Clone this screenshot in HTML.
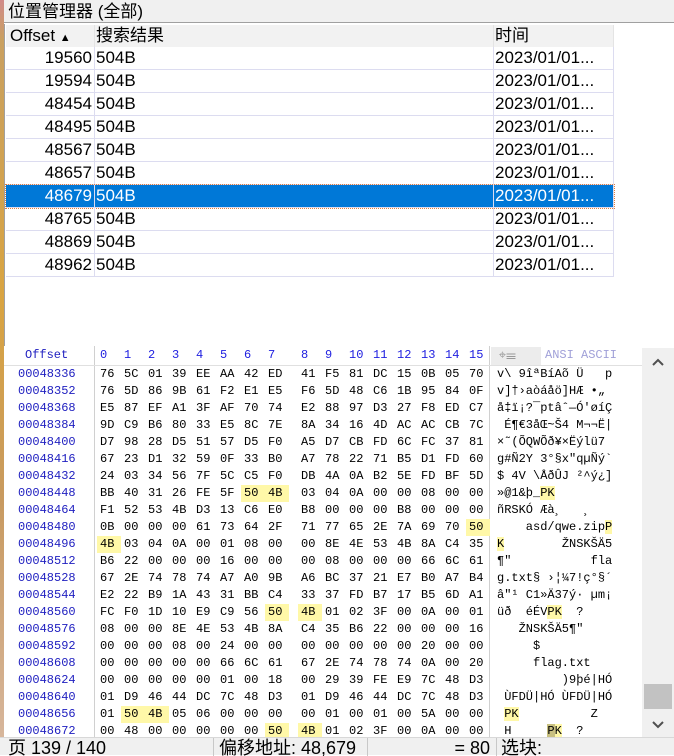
<!DOCTYPE html>
<html><head><meta charset="utf-8"><style>
*{margin:0;padding:0;box-sizing:border-box}
body{width:674px;height:755px;overflow:hidden;background:#fff;position:relative;font-family:"Liberation Sans","Noto Sans CJK SC",sans-serif}
.strip{position:absolute;left:0;top:0;width:4px;height:755px;background:linear-gradient(#d08a8a 0,#c9a060 40px,#d9a441 300px,#c89a60 500px,#d8b8a0 755px)}
.title{position:absolute;left:4px;top:0;width:670px;height:23px;background:#f0f0f0;border-bottom:1px solid #a0a0a0;font-size:17px;line-height:23px;padding-left:4px;color:#000}
.tbl{position:absolute;left:4px;top:24px;width:670px;height:322px;border-left:1px solid #a0a0a0;background:#fff}
.hd{position:absolute;left:1px;top:1px;width:608px;height:22px;background:#f2f2f2;font-size:17px;line-height:22px}
.row{position:absolute;left:1px;width:608px;height:23px;font-size:17px;line-height:22px;border-bottom:1px solid #dcdcf0}
.c1{position:absolute;left:0;width:86px;text-align:right;height:100%}
.c2{position:absolute;left:88px;height:100%;border-left:1px solid #dcdcf0;padding-left:1px;width:400px}
.c3{position:absolute;left:487px;height:100%;border-left:1px solid #dcdcf0;padding-left:1px;width:121px;border-right:1px solid #dcdcf0}
.sel{background:#0078d7;color:#fff;outline:1px dotted #e08040}
.hex{position:absolute;left:4px;top:346px;width:670px;height:392px;background:#fff;font-family:"Liberation Mono",monospace;font-size:12px}
.r{position:absolute;left:0;height:17px;line-height:17px;white-space:pre;width:640px}
.o{position:absolute;left:14px;color:#2020c0}
.h{position:absolute;left:93px}
.h i{display:inline-block;width:24px;padding-left:3px;font-style:normal}
.h i.g{margin-left:9px}
.y{background:#fff8a8}
.a{position:absolute;left:493px}
.a b{font-weight:normal;background:#fff8a8}
.a b.d{background:#c8c080}
.vl1{position:absolute;left:90px;top:0;width:1px;height:392px;background:#d0d0d0}
.vl2{position:absolute;left:485px;top:0;width:1px;height:392px;background:#d0d0d0}
.hl{position:absolute;left:0;top:19px;width:638px;height:1px;background:#e0e0e0}
.sb{position:absolute;left:638px;top:2px;width:32px;height:390px;background:#f0f0f0}
.st{position:absolute;left:0;top:737px;width:674px;height:18px;background:#f0f0f0;font-size:18px;line-height:20px;border-top:1px solid #d8d8d8}
.st div{position:absolute;top:0;height:18px;overflow:hidden}
.sep{border-left:1px solid #c8c8c8}
</style></head><body>
<div class="strip"></div>
<div class="title">位置管理器 (全部)</div>
<div class="tbl">
<div class="hd"><div class="c1" style="text-align:left;padding-left:4px">Offset <span style="font-size:11px">▲</span></div><div class="c2" style="border-color:#e4e4e4">搜索结果</div><div class="c3" style="border-color:#e4e4e4">时间</div></div>
<div class="row" style="top:23px"><div class="c1">19560</div><div class="c2">504B</div><div class="c3">2023/01/01...</div></div>
<div class="row" style="top:46px"><div class="c1">19594</div><div class="c2">504B</div><div class="c3">2023/01/01...</div></div>
<div class="row" style="top:69px"><div class="c1">48454</div><div class="c2">504B</div><div class="c3">2023/01/01...</div></div>
<div class="row" style="top:92px"><div class="c1">48495</div><div class="c2">504B</div><div class="c3">2023/01/01...</div></div>
<div class="row" style="top:115px"><div class="c1">48567</div><div class="c2">504B</div><div class="c3">2023/01/01...</div></div>
<div class="row" style="top:138px"><div class="c1">48657</div><div class="c2">504B</div><div class="c3">2023/01/01...</div></div>
<div class="row sel" style="top:161px"><div class="c1">48679</div><div class="c2">504B</div><div class="c3">2023/01/01...</div></div>
<div class="row" style="top:184px"><div class="c1">48765</div><div class="c2">504B</div><div class="c3">2023/01/01...</div></div>
<div class="row" style="top:207px"><div class="c1">48869</div><div class="c2">504B</div><div class="c3">2023/01/01...</div></div>
<div class="row" style="top:230px"><div class="c1">48962</div><div class="c2">504B</div><div class="c3">2023/01/01...</div></div>
</div>
<div class="hex">
<div class="vl1"></div><div class="vl2"></div><div class="hl"></div>
<div class="r" style="top:1px;color:#2020e0"><span class="o" style="left:21px">Offset</span><span class="h"><i>0</i><i>1</i><i>2</i><i>3</i><i>4</i><i>5</i><i>6</i><i>7</i><i class="g">8</i><i>9</i><i>10</i><i>11</i><i>12</i><i>13</i><i>14</i><i>15</i></span><span style="position:absolute;left:487px;top:0;width:50px;height:18px;background:#ececec;color:#999;font-size:13px">&nbsp;⌖☰</span><span class="a" style="left:541px;color:#a0a0d8">ANSI ASCII</span></div>
<div class="r" style="top:20px"><span class="o">00048336</span><span class="h"><i>76</i><i>5C</i><i>01</i><i>39</i><i>EE</i><i>AA</i><i>42</i><i>ED</i><i class="g">41</i><i>F5</i><i>81</i><i>DC</i><i>15</i><i>0B</i><i>05</i><i>70</i></span><span class="a">v\ 9îªBíAõ Ü   p</span></div>
<div class="r" style="top:37px"><span class="o">00048352</span><span class="h"><i>76</i><i>5D</i><i>86</i><i>9B</i><i>61</i><i>F2</i><i>E1</i><i>E5</i><i class="g">F6</i><i>5D</i><i>48</i><i>C6</i><i>1B</i><i>95</i><i>84</i><i>0F</i></span><span class="a">v]†›aòáåö]HÆ •„ </span></div>
<div class="r" style="top:54px"><span class="o">00048368</span><span class="h"><i>E5</i><i>87</i><i>EF</i><i>A1</i><i>3F</i><i>AF</i><i>70</i><i>74</i><i class="g">E2</i><i>88</i><i>97</i><i>D3</i><i>27</i><i>F8</i><i>ED</i><i>C7</i></span><span class="a">å‡ï¡?¯ptâˆ—Ó'øíÇ</span></div>
<div class="r" style="top:71px"><span class="o">00048384</span><span class="h"><i>9D</i><i>C9</i><i>B6</i><i>80</i><i>33</i><i>E5</i><i>8C</i><i>7E</i><i class="g">8A</i><i>34</i><i>16</i><i>4D</i><i>AC</i><i>AC</i><i>CB</i><i>7C</i></span><span class="a"> É¶€3åŒ~Š4 M¬¬Ë|</span></div>
<div class="r" style="top:88px"><span class="o">00048400</span><span class="h"><i>D7</i><i>98</i><i>28</i><i>D5</i><i>51</i><i>57</i><i>D5</i><i>F0</i><i class="g">A5</i><i>D7</i><i>CB</i><i>FD</i><i>6C</i><i>FC</i><i>37</i><i>81</i></span><span class="a">×˜(ÕQWÕð¥×Ëýlü7 </span></div>
<div class="r" style="top:105px"><span class="o">00048416</span><span class="h"><i>67</i><i>23</i><i>D1</i><i>32</i><i>59</i><i>0F</i><i>33</i><i>B0</i><i class="g">A7</i><i>78</i><i>22</i><i>71</i><i>B5</i><i>D1</i><i>FD</i><i>60</i></span><span class="a">g#Ñ2Y 3°§x"qµÑý`</span></div>
<div class="r" style="top:122px"><span class="o">00048432</span><span class="h"><i>24</i><i>03</i><i>34</i><i>56</i><i>7F</i><i>5C</i><i>C5</i><i>F0</i><i class="g">DB</i><i>4A</i><i>0A</i><i>B2</i><i>5E</i><i>FD</i><i>BF</i><i>5D</i></span><span class="a">$ 4V \ÅðÛJ ²^ý¿]</span></div>
<div class="r" style="top:139px"><span class="o">00048448</span><span class="h"><i>BB</i><i>40</i><i>31</i><i>26</i><i>FE</i><i>5F</i><i class="y">50</i><i class="y">4B</i><i class="g">03</i><i>04</i><i>0A</i><i>00</i><i>00</i><i>08</i><i>00</i><i>00</i></span><span class="a">»@1&amp;þ_<b>PK</b></span></div>
<div class="r" style="top:156px"><span class="o">00048464</span><span class="h"><i>F1</i><i>52</i><i>53</i><i>4B</i><i>D3</i><i>13</i><i>C6</i><i>E0</i><i class="g">B8</i><i>00</i><i>00</i><i>00</i><i>B8</i><i>00</i><i>00</i><i>00</i></span><span class="a">ñRSKÓ Æà¸   ¸   </span></div>
<div class="r" style="top:173px"><span class="o">00048480</span><span class="h"><i>0B</i><i>00</i><i>00</i><i>00</i><i>61</i><i>73</i><i>64</i><i>2F</i><i class="g">71</i><i>77</i><i>65</i><i>2E</i><i>7A</i><i>69</i><i>70</i><i class="y">50</i></span><span class="a">    asd/qwe.zip<b>P</b></span></div>
<div class="r" style="top:190px"><span class="o">00048496</span><span class="h"><i class="y">4B</i><i>03</i><i>04</i><i>0A</i><i>00</i><i>01</i><i>08</i><i>00</i><i class="g">00</i><i>8E</i><i>4E</i><i>53</i><i>4B</i><i>8A</i><i>C4</i><i>35</i></span><span class="a"><b>K</b>        ŽNSKŠÄ5</span></div>
<div class="r" style="top:207px"><span class="o">00048512</span><span class="h"><i>B6</i><i>22</i><i>00</i><i>00</i><i>00</i><i>16</i><i>00</i><i>00</i><i class="g">00</i><i>08</i><i>00</i><i>00</i><i>00</i><i>66</i><i>6C</i><i>61</i></span><span class="a">¶"           fla</span></div>
<div class="r" style="top:224px"><span class="o">00048528</span><span class="h"><i>67</i><i>2E</i><i>74</i><i>78</i><i>74</i><i>A7</i><i>A0</i><i>9B</i><i class="g">A6</i><i>BC</i><i>37</i><i>21</i><i>E7</i><i>B0</i><i>A7</i><i>B4</i></span><span class="a">g.txt§ ›¦¼7!ç°§´</span></div>
<div class="r" style="top:241px"><span class="o">00048544</span><span class="h"><i>E2</i><i>22</i><i>B9</i><i>1A</i><i>43</i><i>31</i><i>BB</i><i>C4</i><i class="g">33</i><i>37</i><i>FD</i><i>B7</i><i>17</i><i>B5</i><i>6D</i><i>A1</i></span><span class="a">â"¹ C1»Ä37ý· µm¡</span></div>
<div class="r" style="top:258px"><span class="o">00048560</span><span class="h"><i>FC</i><i>F0</i><i>1D</i><i>10</i><i>E9</i><i>C9</i><i>56</i><i class="y">50</i><i class="g y">4B</i><i>01</i><i>02</i><i>3F</i><i>00</i><i>0A</i><i>00</i><i>01</i></span><span class="a">üð  éÉV<b>PK</b>  ?    </span></div>
<div class="r" style="top:275px"><span class="o">00048576</span><span class="h"><i>08</i><i>00</i><i>00</i><i>8E</i><i>4E</i><i>53</i><i>4B</i><i>8A</i><i class="g">C4</i><i>35</i><i>B6</i><i>22</i><i>00</i><i>00</i><i>00</i><i>16</i></span><span class="a">   ŽNSKŠÄ5¶"    </span></div>
<div class="r" style="top:292px"><span class="o">00048592</span><span class="h"><i>00</i><i>00</i><i>00</i><i>08</i><i>00</i><i>24</i><i>00</i><i>00</i><i class="g">00</i><i>00</i><i>00</i><i>00</i><i>00</i><i>20</i><i>00</i><i>00</i></span><span class="a">     $          </span></div>
<div class="r" style="top:309px"><span class="o">00048608</span><span class="h"><i>00</i><i>00</i><i>00</i><i>00</i><i>00</i><i>66</i><i>6C</i><i>61</i><i class="g">67</i><i>2E</i><i>74</i><i>78</i><i>74</i><i>0A</i><i>00</i><i>20</i></span><span class="a">     flag.txt   </span></div>
<div class="r" style="top:326px"><span class="o">00048624</span><span class="h"><i>00</i><i>00</i><i>00</i><i>00</i><i>00</i><i>01</i><i>00</i><i>18</i><i class="g">00</i><i>29</i><i>39</i><i>FE</i><i>E9</i><i>7C</i><i>48</i><i>D3</i></span><span class="a">         )9þé|HÓ</span></div>
<div class="r" style="top:343px"><span class="o">00048640</span><span class="h"><i>01</i><i>D9</i><i>46</i><i>44</i><i>DC</i><i>7C</i><i>48</i><i>D3</i><i class="g">01</i><i>D9</i><i>46</i><i>44</i><i>DC</i><i>7C</i><i>48</i><i>D3</i></span><span class="a"> ÙFDÜ|HÓ ÙFDÜ|HÓ</span></div>
<div class="r" style="top:360px"><span class="o">00048656</span><span class="h"><i>01</i><i class="y">50</i><i class="y">4B</i><i>05</i><i>06</i><i>00</i><i>00</i><i>00</i><i class="g">00</i><i>01</i><i>00</i><i>01</i><i>00</i><i>5A</i><i>00</i><i>00</i></span><span class="a"> <b>PK</b>          Z  </span></div>
<div class="r" style="top:377px"><span class="o">00048672</span><span class="h"><i>00</i><i>48</i><i>00</i><i>00</i><i>00</i><i>00</i><i>00</i><i class="y">50</i><i class="g y">4B</i><i>01</i><i>02</i><i>3F</i><i>00</i><i>0A</i><i>00</i><i>00</i></span><span class="a"> H     <b class="d">P</b><b>K</b>  ?    </span></div>
<div class="sb">
<svg style="position:absolute;left:10px;top:10px" width="12" height="8" viewBox="0 0 12 8"><path d="M1 7 L6 2 L11 7" fill="none" stroke="#505050" stroke-width="2"/></svg>
<div style="position:absolute;left:2px;top:336px;width:28px;height:25px;background:#c2c2c2"></div>
<svg style="position:absolute;left:10px;top:373px" width="12" height="8" viewBox="0 0 12 8"><path d="M1 1 L6 6 L11 1" fill="none" stroke="#505050" stroke-width="2"/></svg>
</div>
</div>
<div class="st">
<div style="left:8px">页 139 / 140</div>
<div class="sep" style="left:213px;padding-left:5px;width:154px">偏移地址: 48,679</div>
<div class="sep" style="left:367px;width:129px;text-align:right;padding-right:6px">= 80</div>
<div class="sep" style="left:496px;padding-left:4px;width:178px">选块:</div>
</div>
</body></html>
